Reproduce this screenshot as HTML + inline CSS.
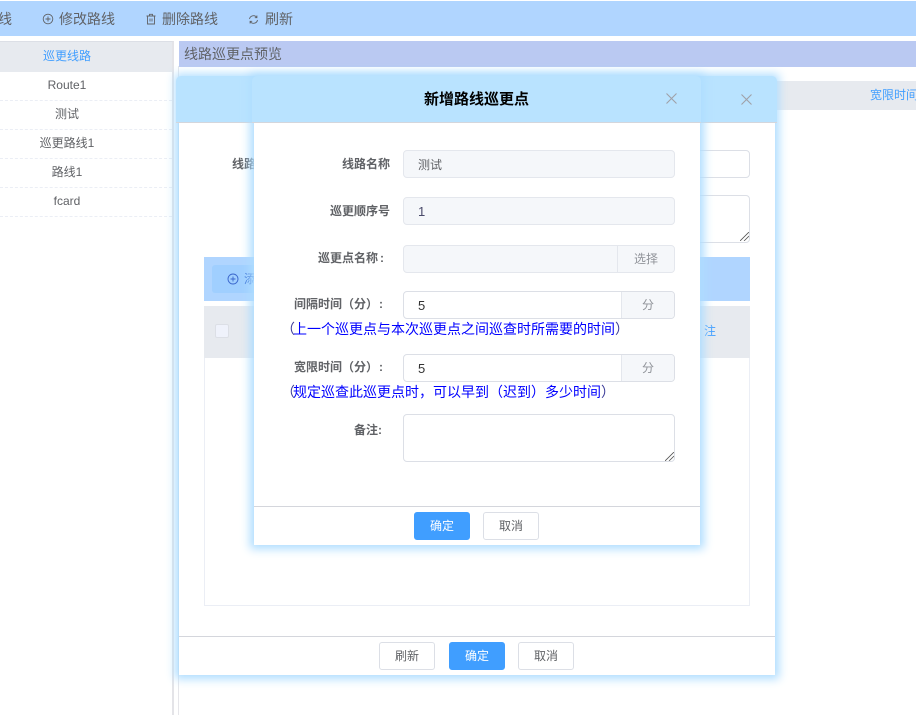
<!DOCTYPE html>
<html><head><meta charset="utf-8"><style>
*{box-sizing:border-box}
html,body{margin:0;padding:0;width:916px;height:715px;overflow:hidden;background:#fff;font-family:"Liberation Sans","Noto Sans CJK SC",sans-serif;font-size:12px;color:#606266}
.a{position:absolute}
.t{position:absolute;white-space:nowrap;line-height:16px}
.r{position:absolute;left:0;width:172px;height:29px;text-align:center;border-bottom:1px dashed #ebeef5;font-size:12px}
.r span{position:absolute;left:0;width:134px;text-align:center;line-height:16px}
.modal{position:absolute;background:#fff;box-shadow:0 0 9px 4px #aeddff}
.hd{position:absolute;background:#b9e3ff;border-radius:5px 5px 0 0;border-bottom:1px solid #d4d6dc}
.inp{position:absolute;border:1px solid #dcdfe6;border-radius:4px;background:#fff}
.dis{background:#f5f7fa;border-color:#e4e7ed}
.lab{position:absolute;font-weight:bold;white-space:nowrap;line-height:16px;color:#606266}
.btn{position:absolute;height:28px;border:1px solid #dcdfe6;border-radius:3px;background:#fff;text-align:center;line-height:27px;font-size:12px;color:#606266}
.pri{background:#409eff;border-color:#409eff;color:#fff}
.app{position:absolute;background:#f5f7fa;border-left:1px solid #e4e7ed;text-align:center;color:#909399;border-radius:0 3px 3px 0;top:0;right:0;height:100%;line-height:26px}
.tip{position:absolute;white-space:nowrap;color:#0000ff;line-height:16px;font-size:14px}
.tip i{font-style:normal;color:#3c3c99;position:relative}
.tip i.o{left:2px}
</style></head><body>
<div class="a" style="left:0;top:1px;width:916px;height:35px;background:#b0d5ff"></div>
<div class="t" style="left:-2px;top:11px;font-size:14px">线</div>
<svg class="a" style="left:42px;top:13px" width="12" height="12" viewBox="0 0 12 12" fill="none" stroke="#606266" stroke-width=".9"><circle cx="6" cy="6" r="4.8"/><path d="M3.500 6h5M6 3.500v5"/></svg>
<div class="t" style="left:59px;top:11px;font-size:14px">修改路线</div>
<svg class="a" style="left:145px;top:13px" width="12" height="12" viewBox="0 0 12 12" fill="none" stroke="#606266" stroke-width=".9"><path d="M1.500 3h9M4.500 3V1.300h3V3M2.500 3v8h7V3M5 5.500v3M7 5.500v3"/></svg>
<div class="t" style="left:162px;top:11px;font-size:14px">删除路线</div>
<svg class="a" style="left:248px;top:14px" width="11" height="11" viewBox="0 0 11 11" fill="none" stroke="#606266" stroke-width=".9"><path d="M1.500 5A4 4 0 0 1 8.800 3.500M9.500 6A4 4 0 0 1 2.200 7.500M8.900 1.500v2.200H6.800M2.100 9.500V7.300h2.100"/></svg>
<div class="t" style="left:265px;top:11px;font-size:14px">刷新</div>

<!-- sidebar -->
<div class="a" style="left:0;top:41px;width:174px;height:674px;background:#fff;border-top:1px solid #dcdfe6;border-right:2px solid #e4e4e8"></div>
<div class="a" style="left:0;top:42px;width:172px;height:30px;background:#e7eaef"></div>
<div class="t" style="left:43px;top:48px;color:#409eff">巡更线路</div>
<div class="r" style="top:72px"><span style="top:5px">Route1</span></div>
<div class="r" style="top:101px"><span style="top:5px">测试</span></div>
<div class="r" style="top:130px"><span style="top:5px">巡更路线1</span></div>
<div class="r" style="top:159px"><span style="top:5px">路线1</span></div>
<div class="r" style="top:188px"><span style="top:5px">fcard</span></div>

<!-- right panel -->
<div class="a" style="left:179px;top:41px;width:737px;height:26px;background:#bac9f2"></div>
<div class="t" style="left:184px;top:46px;font-size:14px">线路巡更点预览</div>
<div class="a" style="left:178px;top:66px;width:1px;height:649px;background:#e6e6ea"></div>
<div class="a" style="left:749px;top:81px;width:167px;height:29px;background:#e7eaef"></div>
<div class="t" style="left:870px;top:87px;color:#409eff">宽限时间</div>

<!-- modal 1 -->
<div class="modal" style="left:179px;top:78px;width:596px;height:597px"></div>
<div class="hd" style="left:176px;top:76px;width:601px;height:47px"></div>
<svg class="a" style="left:741px;top:94px" width="11" height="11" viewBox="0 0 11 11" stroke="#a0a0a8" stroke-width="1.100"><path d="M.5.500l10 10M10.500.500l-10 10"/></svg>
<div class="lab" style="left:232px;top:156px">线路</div>
<div class="inp" style="left:600px;top:150px;width:150px;height:28px"></div>
<div class="inp" style="left:600px;top:195px;width:150px;height:48px"></div>
<svg class="a" style="left:740px;top:232px" width="9" height="9" viewBox="0 0 9 9" stroke="#555" stroke-width=".8"><path d="M0 9L9 0M4 9L9 4"/></svg>
<div class="a" style="left:204px;top:257px;width:546px;height:44px;background:#b0d5ff"></div>
<div class="a" style="left:212px;top:265px;width:60px;height:28px;background:#a0cfff;border-radius:3px"></div>
<svg class="a" style="left:227px;top:273px" width="12" height="12" viewBox="0 0 12 12" fill="none" stroke="#3a66cc" stroke-width=".9"><circle cx="6" cy="6" r="5"/><path d="M3.500 6h5M6 3.500v5"/></svg>
<div class="t" style="left:244px;top:271px;color:#3b73d9">添</div>
<div class="a" style="left:204px;top:306px;width:546px;height:300px;border:1px solid #ebeef5"></div>
<div class="a" style="left:204px;top:306px;width:546px;height:52px;background:#e7eaef"></div>
<div class="a" style="left:215px;top:324px;width:14px;height:14px;background:#eff2fb;border:1px solid #dcdfe6;border-radius:2px"></div>
<div class="t" style="left:704px;top:323px;color:#409eff">注</div>
<div class="a" style="left:179px;top:636px;width:596px;height:1px;background:#d4d6dc"></div>
<div class="btn" style="left:379px;top:642px;width:56px">刷新</div>
<div class="btn pri" style="left:449px;top:642px;width:56px">确定</div>
<div class="btn" style="left:518px;top:642px;width:56px">取消</div>

<!-- modal 2 -->
<div class="modal" style="left:254px;top:78px;width:446px;height:467px"></div>
<div class="hd" style="left:252px;top:76px;width:449px;height:47px"></div>
<div class="t" style="left:424px;top:92px;font-size:15px;font-weight:bold;color:#000">新增路线巡更点</div>
<svg class="a" style="left:666px;top:93px" width="11" height="11" viewBox="0 0 11 11" stroke="#a0a0a8" stroke-width="1.100"><path d="M.5.500l10 10M10.500.500l-10 10"/></svg>

<div class="lab" style="left:342px;top:156px">线路名称</div>
<div class="inp dis" style="left:403px;top:150px;width:272px;height:28px"></div>
<div class="t" style="left:418px;top:157px">测试</div>
<div class="lab" style="left:330px;top:203px">巡更顺序号</div>
<div class="inp dis" style="left:403px;top:197px;width:272px;height:28px"></div>
<div class="t" style="left:418px;top:204px;font-size:13px;color:#4a4a6a">1</div>
<div class="lab" style="left:318px;top:250px">巡更点名称</div>
<div class="lab" style="left:380px;top:250px">:</div>
<div class="inp dis" style="left:403px;top:245px;width:272px;height:28px"><div class="app" style="width:57px">选择</div></div>

<div class="lab" style="left:294px;top:296px">间隔时间（分）</div>
<div class="lab" style="left:379px;top:296px">:</div>
<div class="inp" style="left:403px;top:291px;width:272px;height:28px"><div class="app" style="width:53px">分</div></div>
<div class="t" style="left:418px;top:298px;font-size:13px;color:#333">5</div>
<div class="tip" style="left:279px;top:321px"><i class="o">（</i>上一个巡更点与本次巡更点之间巡查时所需要的时间<i>）</i></div>

<div class="lab" style="left:294px;top:359px">宽限时间（分）</div>
<div class="lab" style="left:379px;top:359px">:</div>
<div class="inp" style="left:403px;top:354px;width:272px;height:28px"><div class="app" style="width:53px">分</div></div>
<div class="t" style="left:418px;top:361px;font-size:13px;color:#333">5</div>
<div class="tip" style="left:279px;top:384px"><i class="o">（</i>规定巡查此巡更点时，可以早到（迟到）多少时间<i>）</i></div>

<div class="lab" style="left:354px;top:422px">备注:</div>
<div class="inp" style="left:403px;top:414px;width:272px;height:48px"></div>
<svg class="a" style="left:665px;top:452px" width="9" height="9" viewBox="0 0 9 9" stroke="#555" stroke-width=".8"><path d="M0 9L9 0M4 9L9 4"/></svg>

<div class="a" style="left:254px;top:506px;width:446px;height:1px;background:#d4d6dc"></div>
<div class="btn pri" style="left:414px;top:512px;width:56px">确定</div>
<div class="btn" style="left:483px;top:512px;width:56px">取消</div>
</body></html>
